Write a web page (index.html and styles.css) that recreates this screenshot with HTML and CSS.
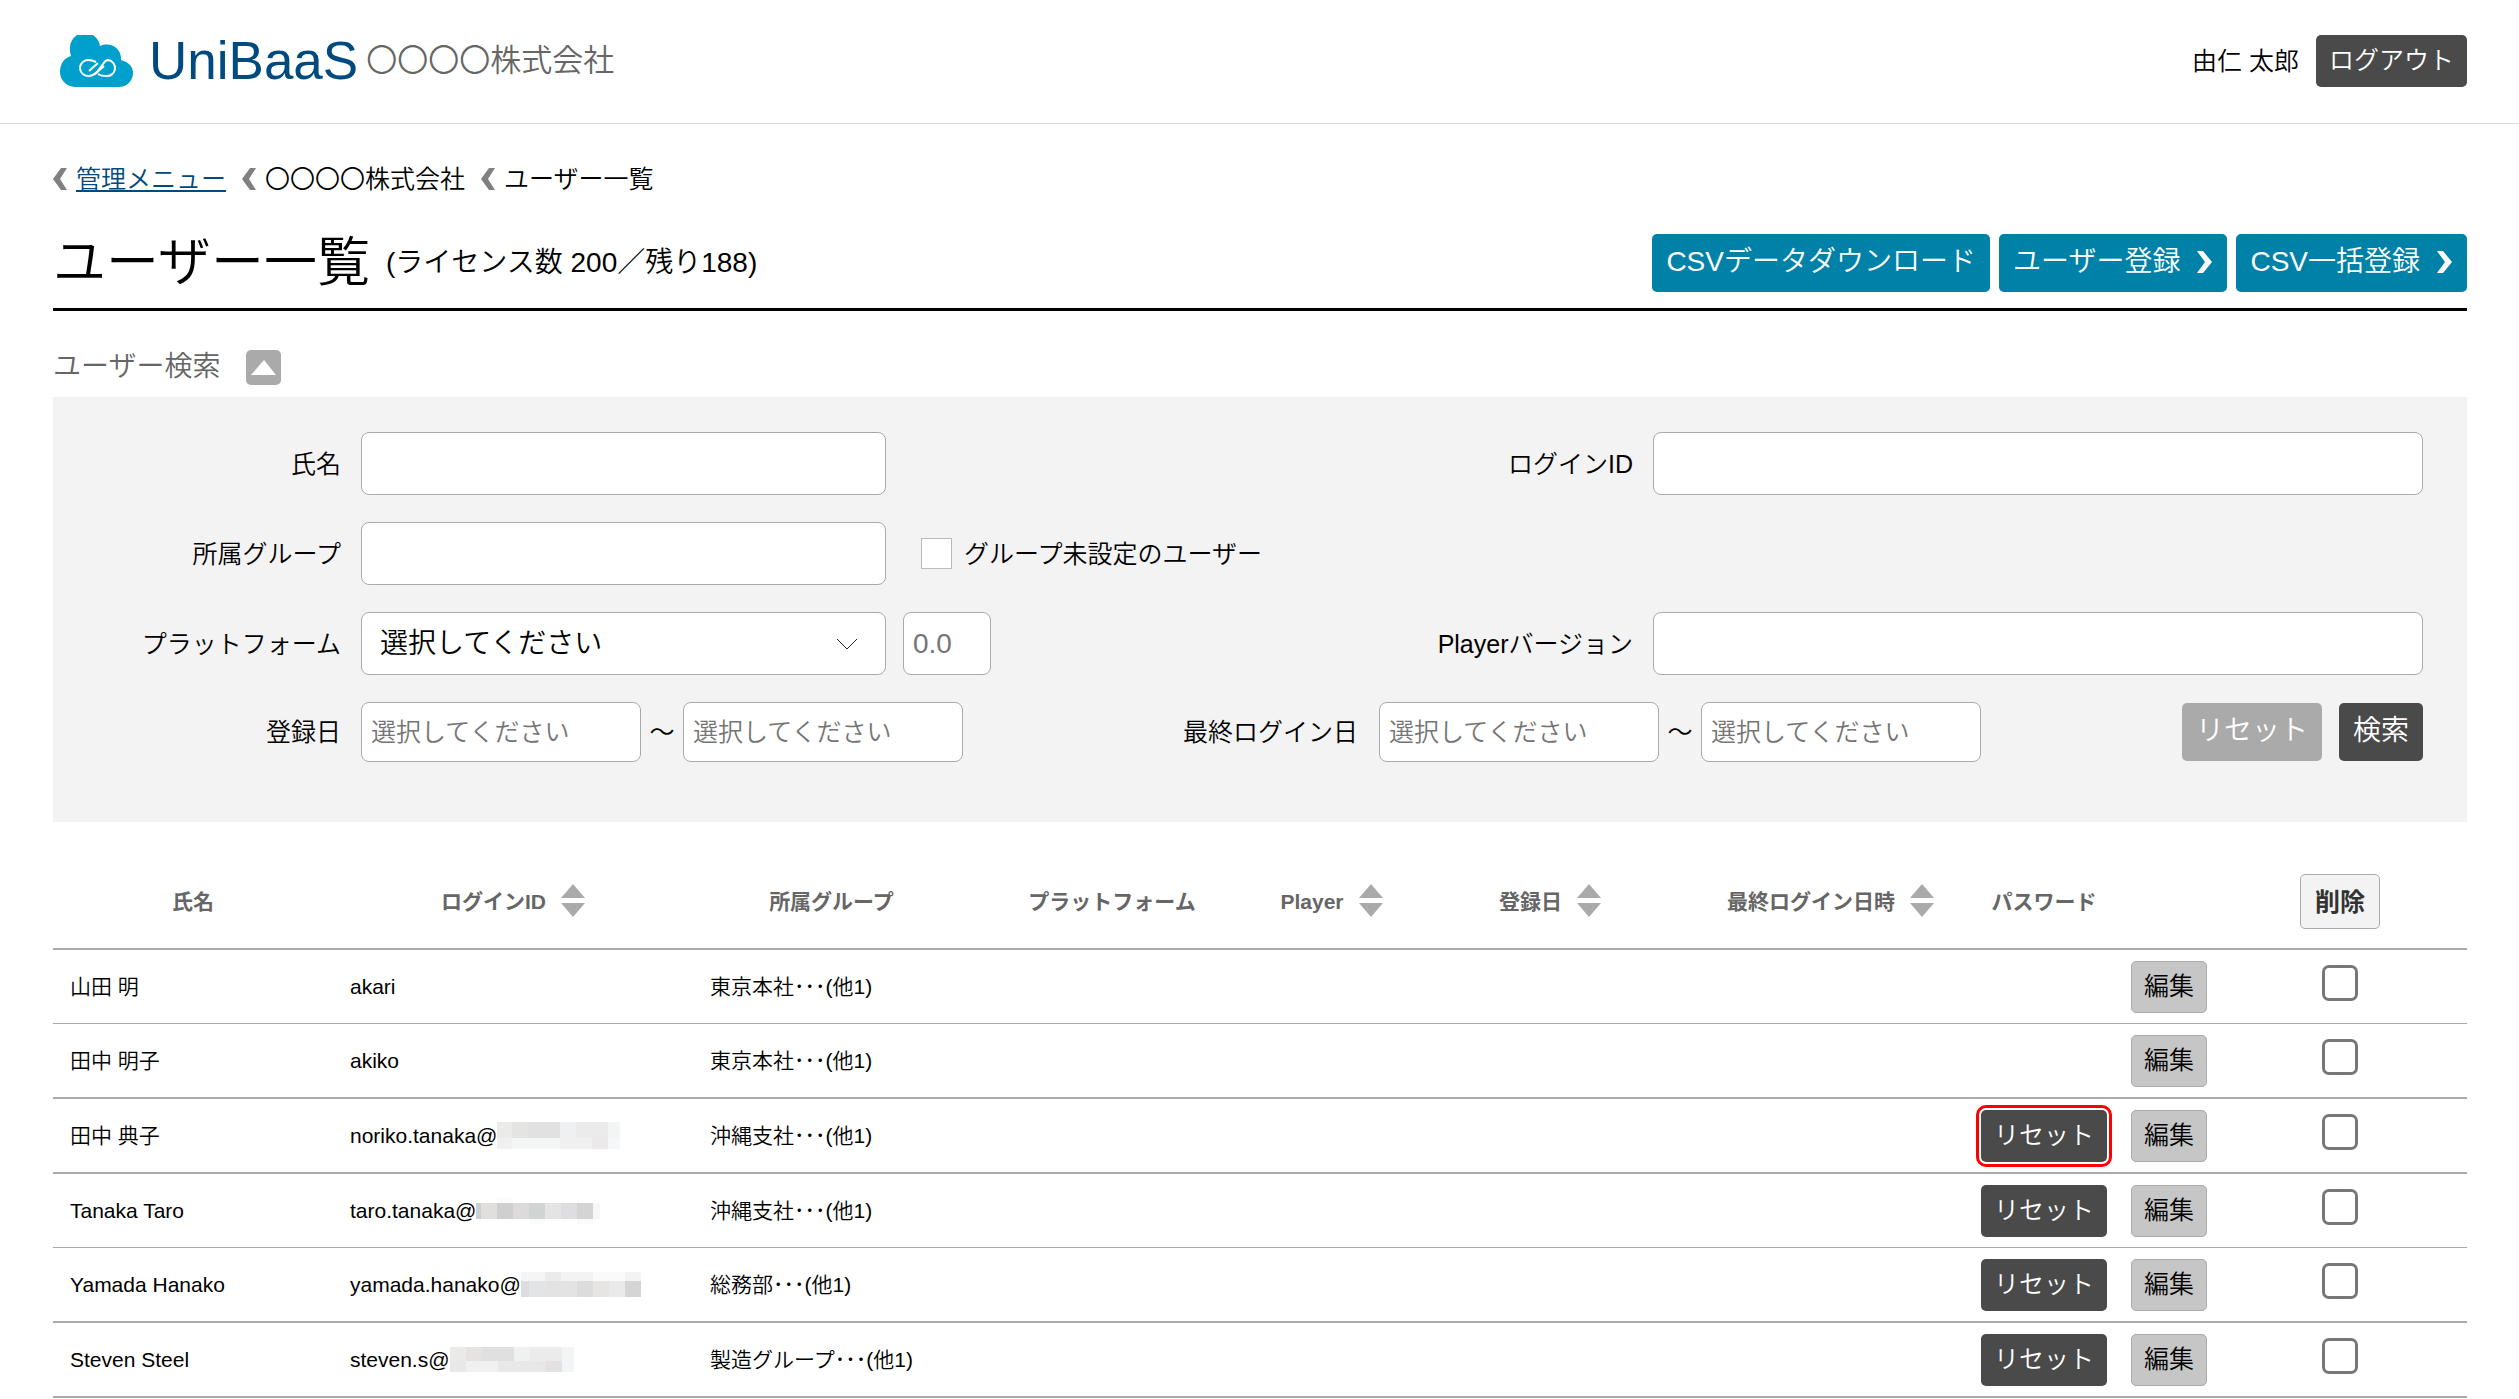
FILE: index.html
```html
<!DOCTYPE html>
<html lang="ja">
<head>
    <meta charset="UTF-8">
    <meta name="viewport" content="width=device-width, initial-scale=1.0">
    <title>ユーザー一覧 | UniBaaS</title>
    <link rel="stylesheet" href="styles.css">
</head>
<body>
    <!-- ヘッダー -->
    <header class="header">
        <a class="logo" href="#">
            <svg class="logo-mark" viewBox="0 0 73 52">
                <path d="M15 52A15 15 0 0 1 0 37C0 29 4 23 11 21A14 14 0 0 1 10 15A15 15 0 0 1 40 11C51 6 62 14 61 25C69 27 73 32 73 38A14 14 0 0 1 59 52Z" fill="#00a0cc"/>
                <path d="M36 27C34 26 31 25 28 25A8 8 0 0 0 28 41C32 41 34 40 37 37L43 29C45 26 46 25 48 25A8 8 0 0 1 46 41C43 41 41 41 38 39" fill="none" stroke="#fff" stroke-width="2"/>
                <path d="M29 36L38 28M35 39L44 31" fill="none" stroke="#fff" stroke-width="2"/>
            </svg>
            <span class="logo-text">UniBaaS</span>
        </a>
        <span class="company">〇〇〇〇株式会社</span>
        <span class="login-user">由仁 太郎</span>
        <button class="btn btn-dark" type="button">ログアウト</button>
    </header>

    <main class="main">
        <!-- パンくず -->
        <nav class="breadcrumb">
            <span class="crumb"><svg class="chev" viewBox="0 0 14 22"><path d="M8 0H14L7 11L14 22H8L0 11Z"/></svg><a href="#">管理メニュー</a></span>
            <span class="crumb"><svg class="chev" viewBox="0 0 14 22"><path d="M8 0H14L7 11L14 22H8L0 11Z"/></svg>〇〇〇〇株式会社</span>
            <span class="crumb"><svg class="chev" viewBox="0 0 14 22"><path d="M8 0H14L7 11L14 22H8L0 11Z"/></svg>ユーザー一覧</span>
        </nav>

        <div class="title-bar">
            <h1 class="title">ユーザー一覧</h1>
            <span class="license">(ライセンス数 200／残り188)</span>
            <div class="title-btns">
                <button class="btn btn-blue" type="button">CSVデータダウンロード</button>
                <button class="btn btn-blue" type="button">ユーザー登録<svg class="chev" viewBox="0 0 16 22"><path d="M6 0H0L8 11L0 22H6L15 11Z"/></svg></button>
                <button class="btn btn-blue" type="button">CSV一括登録<svg class="chev" viewBox="0 0 16 22"><path d="M6 0H0L8 11L0 22H6L15 11Z"/></svg></button>
            </div>
        </div>

        <!-- 検索 -->
        <div class="search-head">
            <h2 class="search-title">ユーザー検索</h2>
            <button class="toggle" type="button" aria-label="閉じる"><svg viewBox="0 0 35 35"><path d="M18 10L30 25H5Z" fill="#fff"/></svg></button>
        </div>
        <form class="search">
            <label class="lbl" for="name">氏名</label>
            <input class="field" id="name" type="text">
            <div class="mid"><label class="lbl" for="login-id">ログインID</label></div>
            <input class="field" id="login-id" type="text">

            <label class="lbl" for="group">所属グループ</label>
            <input class="field" id="group" type="text">
            <div class="mid wide">
                <label class="check-label"><input class="check" type="checkbox">グループ未設定のユーザー</label>
            </div>

            <label class="lbl" for="platform">プラットフォーム</label>
            <select class="field select" id="platform"><option>選択してください</option></select>
            <div class="mid">
                <input class="field version" type="text" placeholder="0.0" aria-label="プラットフォームバージョン">
                <label class="lbl" for="player">Playerバージョン</label>
            </div>
            <input class="field" id="player" type="text">

            <label class="lbl" for="reg-from">登録日</label>
            <div class="dates">
                <input class="field date" id="reg-from" type="text" placeholder="選択してください">
                <span class="wave">～</span>
                <input class="field date" type="text" placeholder="選択してください" aria-label="登録日 終了">
                <label class="lbl login-lbl" for="login-from">最終ログイン日</label>
                <input class="field date" id="login-from" type="text" placeholder="選択してください">
                <span class="wave">～</span>
                <input class="field date" type="text" placeholder="選択してください" aria-label="最終ログイン日 終了">
                <div class="search-btns">
                    <button class="btn btn-gray" type="reset">リセット</button>
                    <button class="btn btn-search" type="button">検索</button>
                </div>
            </div>
        </form>

        <!-- 一覧 -->
        <table class="list">
            <colgroup>
                <col class="c-name"><col class="c-id"><col class="c-group"><col class="c-pf"><col class="c-player">
                <col class="c-reg"><col class="c-last"><col class="c-pw"><col class="c-edit"><col class="c-del">
            </colgroup>
            <thead>
                <tr>
                    <th>氏名</th>
                    <th><span class="sort">ログインID<svg viewBox="0 0 24 33"><path d="M12 0L24 14H0ZM12 33L24 19H0Z"/></svg></span></th>
                    <th>所属グループ</th>
                    <th>プラットフォーム</th>
                    <th><span class="sort">Player<svg viewBox="0 0 24 33"><path d="M12 0L24 14H0ZM12 33L24 19H0Z"/></svg></span></th>
                    <th><span class="sort">登録日<svg viewBox="0 0 24 33"><path d="M12 0L24 14H0ZM12 33L24 19H0Z"/></svg></span></th>
                    <th><span class="sort">最終ログイン日時<svg viewBox="0 0 24 33"><path d="M12 0L24 14H0ZM12 33L24 19H0Z"/></svg></span></th>
                    <th>パスワード</th>
                    <th></th>
                    <th><button class="btn btn-delete" type="button">削除</button></th>
                </tr>
            </thead>
            <tbody>
                <tr>
                    <td>山田 明</td><td>akari</td><td>東京本社･･･(他1)</td><td></td><td></td><td></td><td></td>
                    <td class="pw"></td>
                    <td class="edit"><button class="btn btn-edit" type="button">編集</button></td>
                    <td class="del"><input class="row-check" type="checkbox" aria-label="山田 明"></td>
                </tr>
                <tr>
                    <td>田中 明子</td><td>akiko</td><td>東京本社･･･(他1)</td><td></td><td></td><td></td><td></td>
                    <td class="pw"></td>
                    <td class="edit"><button class="btn btn-edit" type="button">編集</button></td>
                    <td class="del"><input class="row-check" type="checkbox" aria-label="田中 明子"></td>
                </tr>
                <tr>
                    <td>田中 典子</td>
                    <td><span class="mail">noriko.tanaka@<svg class="mosaic" viewBox="0 0 124 27">
                        <path d="M0 0H15V16H0Z" fill="#ebebe9"/><path d="M15 0H31V16H15Z" fill="#e4e4e2"/><path d="M31 0H63V16H31Z" fill="#e0e1e0"/>
                        <path d="M63 0H79V16H63Z" fill="#eff0f2"/><path d="M79 0H111V16H79Z" fill="#ebebec"/><path d="M111 0H123V16H111Z" fill="#f3f4f4"/>
                        <path d="M0 16H15V27H0Z" fill="#f0f0f1"/><path d="M15 16H63V27H15Z" fill="#f4f5f5"/><path d="M63 16H95V27H63Z" fill="#f0f0f0"/>
                        <path d="M95 16H111V27H95Z" fill="#ebe9ea"/><path d="M111 16H123V27H111Z" fill="#f6f7f9"/>
                    </svg></span></td>
                    <td>沖縄支社･･･(他1)</td><td></td><td></td><td></td><td></td>
                    <td class="pw"><button class="btn btn-dark marked" type="button">リセット</button></td>
                    <td class="edit"><button class="btn btn-edit" type="button">編集</button></td>
                    <td class="del"><input class="row-check" type="checkbox" aria-label="田中 典子"></td>
                </tr>
                <tr>
                    <td>Tanaka Taro</td>
                    <td><span class="mail">taro.tanaka@<svg class="mosaic" viewBox="0 0 124 27">
                        <path d="M0 6H5V22H0Z" fill="#cdcfd1"/><path d="M5 6H21V22H5Z" fill="#e0dfdd"/><path d="M21 6H37V22H21Z" fill="#cfcfcf"/>
                        <path d="M37 6H53V22H37Z" fill="#dcdadb"/><path d="M53 6H69V22H53Z" fill="#d0d5d4"/><path d="M69 6H85V22H69Z" fill="#e4e4e4"/>
                        <path d="M85 6H101V22H85Z" fill="#dedee0"/><path d="M101 6H117V22H101Z" fill="#d4d4d4"/><path d="M117 6H124V22H117Z" fill="#f6f7f9"/>
                        <path d="M21 0H37V6H21ZM53 22H69V27H53ZM101 22H117V27H101Z" fill="#fbfbfb"/>
                    </svg></span></td>
                    <td>沖縄支社･･･(他1)</td><td></td><td></td><td></td><td></td>
                    <td class="pw"><button class="btn btn-dark" type="button">リセット</button></td>
                    <td class="edit"><button class="btn btn-edit" type="button">編集</button></td>
                    <td class="del"><input class="row-check" type="checkbox" aria-label="Tanaka Taro"></td>
                </tr>
                <tr>
                    <td>Yamada Hanako</td>
                    <td><span class="mail">yamada.hanako@<svg class="mosaic" viewBox="0 0 124 27">
                        <path d="M0 1H24V10H0Z" fill="#f5f5f6"/><path d="M24 1H40V10H24Z" fill="#ebebeb"/><path d="M40 1H72V10H40Z" fill="#f3f3f3"/>
                        <path d="M72 1H104V10H72Z" fill="#fafafa"/><path d="M104 1H120V10H104Z" fill="#f3f3f3"/>
                        <path d="M0 10H8V26H0Z" fill="#dcdddf"/><path d="M8 10H24V26H8Z" fill="#e2e4e5"/><path d="M24 10H56V26H24Z" fill="#e3e3e3"/>
                        <path d="M56 10H72V26H56Z" fill="#dcdcdc"/><path d="M72 10H88V26H72Z" fill="#e7e5e4"/><path d="M88 10H104V26H88Z" fill="#e9eae9"/><path d="M104 10H120V26H104Z" fill="#d5d5d5"/>
                    </svg></span></td>
                    <td>総務部･･･(他1)</td><td></td><td></td><td></td><td></td>
                    <td class="pw"><button class="btn btn-dark" type="button">リセット</button></td>
                    <td class="edit"><button class="btn btn-edit" type="button">編集</button></td>
                    <td class="del"><input class="row-check" type="checkbox" aria-label="Yamada Hanako"></td>
                </tr>
                <tr>
                    <td>Steven Steel</td>
                    <td><span class="mail">steven.s@<svg class="mosaic" viewBox="0 0 124 27">
                        <path d="M0 1H16V15H0Z" fill="#eaeae9"/><path d="M16 1H32V15H16Z" fill="#e6e2e1"/><path d="M32 1H64V15H32Z" fill="#e0e0e1"/>
                        <path d="M64 1H80V15H64Z" fill="#eff0f0"/><path d="M80 1H112V15H80Z" fill="#ebebeb"/><path d="M112 1H124V15H112Z" fill="#f3f4f4"/>
                        <path d="M0 15H16V26H0Z" fill="#e8e8e8"/><path d="M16 15H48V26H16Z" fill="#f1f0f1"/><path d="M48 15H96V26H48Z" fill="#e8e8e8"/>
                        <path d="M96 15H112V26H96Z" fill="#e3e1e2"/><path d="M112 15H124V26H112Z" fill="#f3f4f5"/>
                    </svg></span></td>
                    <td>製造グループ･･･(他1)</td><td></td><td></td><td></td><td></td>
                    <td class="pw"><button class="btn btn-dark" type="button">リセット</button></td>
                    <td class="edit"><button class="btn btn-edit" type="button">編集</button></td>
                    <td class="del"><input class="row-check" type="checkbox" aria-label="Steven Steel"></td>
                </tr>
            </tbody>
        </table>
    </main>
</body>
</html>
```
FILE: styles.css
```css
* {
    box-sizing: border-box;
}
body {
    margin: 0;
    background: #fff;
    color: #000;
    font-family: "Liberation Sans", "Noto Sans CJK JP", sans-serif;
    font-size: 25px;
    font-weight: 350;
    line-height: 36px;
}
button, input, select {
    font: inherit;
    color: inherit;
}

/* ボタン共通 */
.btn {
    display: inline-flex;
    align-items: center;
    justify-content: center;
    height: 52px;
    padding: 0 12px 2px;
    border: 1px solid transparent;
    border-radius: 5px;
    font-size: 25px;
    white-space: nowrap;
}
.btn-dark {
    background: #4a4a4a;
    color: #fff;
}
.btn-blue, .btn-gray, .btn-search {
    height: 58px;
    padding: 0 13px 2px;
    font-size: 28px;
    color: #fff;
}
.btn-blue {
    background: #0082a8;
}
.btn-gray {
    background: #aaa;
}
.btn-search {
    background: #4a4a4a;
}
.btn-edit {
    background: #c6c6c6;
    border-color: #aaa;
}
.btn-delete {
    height: 55px;
    padding: 0 14px;
    background: #f3f3f3;
    border-color: #aaa;
    color: #333;
    font-weight: bold;
}

/* ヘッダー */
.header {
    display: flex;
    align-items: center;
    height: 124px;
    padding: 0 52px 2px 60px;
    border-bottom: 1px solid #d8dcdc;
}
.logo {
    display: flex;
    align-items: center;
    gap: 16px;
    text-decoration: none;
    color: #004a80;
}
.logo-mark {
    width: 73px;
    height: 52px;
}
.logo-text {
    font-size: 53px;
    line-height: 60px;
}
.company {
    margin-left: 8px;
    font-size: 31px;
    color: #666;
}
.login-user {
    margin: 0 17px 0 auto;
}

.main {
    padding: 0 52px 0 53px;
}

/* パンくず */
.breadcrumb {
    display: flex;
    gap: 16px;
    padding: 37px 0 0;
}
.crumb {
    display: flex;
    align-items: center;
    gap: 9px;
}
.crumb a {
    color: #004a80;
}
.chev {
    width: 14px;
    height: 22px;
    fill: #808080;
}

/* タイトル */
.title-bar {
    display: flex;
    align-items: center;
    height: 114px;
    padding-top: 20px;
    border-bottom: 3px solid #000;
}
.title {
    margin: 0 16px 0 0;
    font-size: 53px;
    font-weight: inherit;
    line-height: 60px;
}
.license {
    font-size: 28px;
}
.title-btns {
    display: flex;
    gap: 9px;
    margin-left: auto;
}
.btn-blue .chev {
    width: 16px;
    margin-left: 17px;
    fill: #fff;
}

/* 検索 */
.search-head {
    display: flex;
    align-items: center;
    gap: 26px;
    padding: 38px 0 12px;
}
.search-title {
    margin: 0;
    font-size: 28px;
    font-weight: inherit;
    color: #666;
}
.toggle {
    display: flex;
    width: 35px;
    height: 35px;
    padding: 0;
    border: 0;
    border-radius: 5px;
    background: #aaa;
}
.search {
    display: grid;
    grid-template-columns: 291fr 525fr 733fr 770fr;
    gap: 27px 17px;
    align-items: center;
    padding: 35px 44px 60px 0;
    background: #f3f3f3;
}
.lbl {
    padding-right: 3px;
    text-align: right;
    white-space: nowrap;
}
.field {
    width: 100%;
    height: 63px;
    padding: 0 9px;
    border: 1px solid #aaa;
    border-radius: 8px;
    background: #fff;
    font-size: 28px;
}
.field::placeholder {
    color: #757575;
}
.mid {
    display: flex;
    align-items: center;
}
.mid .lbl {
    margin-left: auto;
}
.wide {
    grid-column: 3 / 5;
}
.check-label {
    display: flex;
    align-items: center;
    gap: 12px;
    padding-left: 18px;
}
.check {
    appearance: none;
    width: 31px;
    height: 31px;
    margin: 0;
    border: 1px solid #bbb;
    background: #fff;
}
.select {
    appearance: none;
    padding: 0 18px;
    background: #fff url("data:image/svg+xml,%3Csvg xmlns='http://www.w3.org/2000/svg' width='22' height='12'%3E%3Cpath d='M1 1L11 11L21 1' fill='none' stroke='%23222'/%3E%3C/svg%3E") no-repeat right 27px center;
}
.version {
    width: 88px;
}
.dates {
    grid-column: 2 / 5;
    display: flex;
    align-items: center;
}
.date {
    width: 280px;
    height: 60px;
    font-size: 25px;
}
.wave {
    width: 42px;
    text-align: center;
}
.login-lbl {
    width: 416px;
    padding-right: 21px;
}
.search-btns {
    display: flex;
    gap: 17px;
    margin-left: auto;
}

/* 一覧 */
.list {
    width: 100%;
    margin-top: 35px;
    border-collapse: separate;
    border-spacing: 0;
    table-layout: fixed;
    font-size: 21px;
}
.c-name { width: 280px; }
.c-id { width: 360px; }
.c-group { width: 277px; }
.c-pf { width: 284px; }
.c-player { width: 155px; }
.c-reg { width: 282px; }
.c-last { width: 279px; }
.c-pw { width: 148px; }
.c-edit { width: 95px; }
.c-del { width: 254px; }
.list th {
    height: 93px;
    padding: 0 0 2px;
    border-bottom: 2px solid #aaa;
    color: #666;
    white-space: nowrap;
}
.sort {
    display: inline-flex;
    align-items: flex-start;
    gap: 15px;
}
.sort svg {
    width: 24px;
    height: 33px;
    fill: #aaa;
}
.list td {
    height: 75px;
    padding: 0 0 0 17px;
    border-bottom: 2px solid #aaa;
    white-space: nowrap;
}
.list tr:nth-child(3n+1) td {
    height: 74px;
    border-bottom-width: 1px;
}
.list td.pw, .list td.del {
    padding: 0;
    text-align: center;
}
.list td.edit {
    padding: 0 0 0 13px;
}
.list td .btn {
    vertical-align: middle;
}
.marked {
    outline: 3px solid #f00;
    outline-offset: 2px;
}
.mail {
    display: flex;
    align-items: center;
}
.mosaic {
    width: 124px;
    height: 27px;
}
.row-check {
    appearance: none;
    width: 36px;
    height: 36px;
    margin: 0 0 8px;
    border: 3px solid #777;
    border-radius: 7px;
    background: #fff;
    vertical-align: middle;
}
```
